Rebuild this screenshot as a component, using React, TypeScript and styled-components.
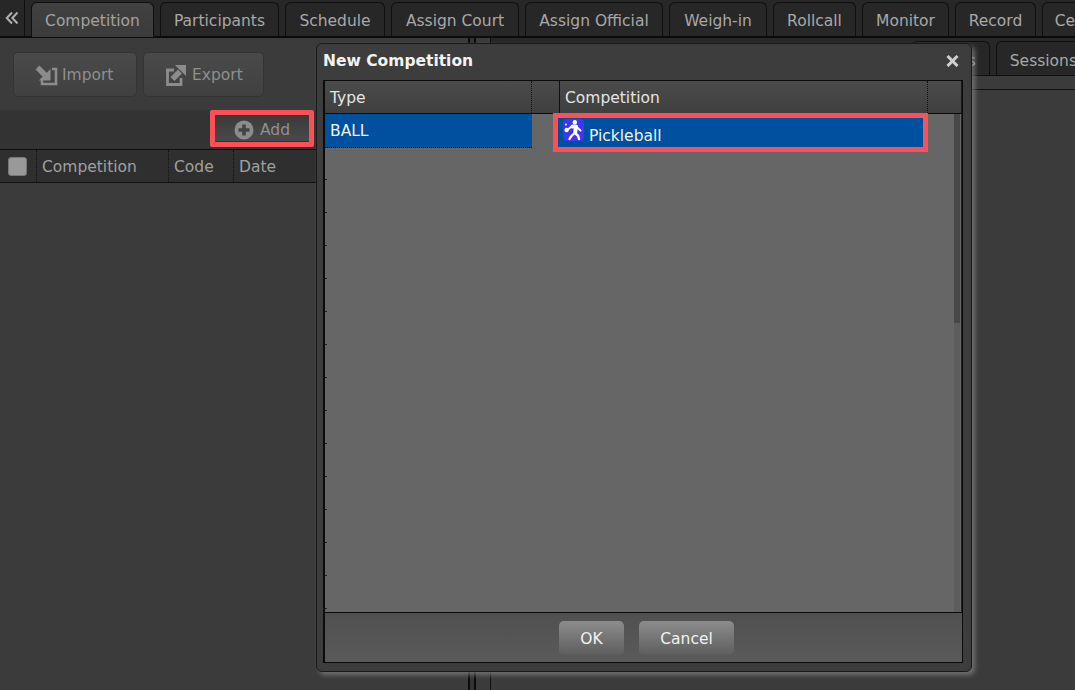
import React from 'react';
import styled, { createGlobalStyle } from 'styled-components';

const tabs = [
  { label: 'Participants', width: 119 },
  { label: 'Schedule', width: 100 },
  { label: 'Assign Court', width: 128 },
  { label: 'Assign Official', width: 138 },
  { label: 'Weigh-in', width: 98 },
  { label: 'Rollcall', width: 83 },
  { label: 'Monitor', width: 87 },
  { label: 'Record', width: 81 },
  { label: 'Certificate', width: 106 },
];

const GlobalStyle = createGlobalStyle`
  html, body { margin: 0; padding: 0; height: 100%; overflow: hidden; background: #3b3b3b; }
  * { box-sizing: border-box; }
`;

const Page = styled.div`
  position: relative;
  width: 1075px;
  height: 690px;
  overflow: hidden;
  display: flex;
  flex-direction: column;
  background: #3b3b3b;
  font-family: 'DejaVu Sans', 'Noto Sans', sans-serif;
  font-size: 15.5px;
  color: #a8a8a8;
`;

const TabBar = styled.div`
  height: 38px;
  flex: none;
  display: flex;
  gap: 6px;
  align-items: flex-end;
  background: #272727;
  border-bottom: 2px solid #0b0b0b;
  white-space: nowrap;
`;

const Collapse = styled.div`
  width: 25px;
  height: 36px;
  flex: none;
  display: flex;
  align-items: center;
  justify-content: center;
  border-right: 1px solid #0f0f0f;
  color: #b0b0b0;
`;

const Tab = styled.div<{ $active?: boolean; $w?: number }>`
  flex: none;
  width: ${p => (p.$w ? `${p.$w}px` : 'auto')};
  height: ${p => (p.$active ? 35 : 34)}px;
  padding: 2px 13px 0;
  display: flex;
  align-items: center;
  justify-content: center;
  border: 1px solid #0f0f0f;
  border-bottom: none;
  border-radius: 6px 6px 0 0;
  background: ${p => (p.$active ? 'linear-gradient(#414141, #3b3b3b)' : '#272727')};
  color: ${p => (p.$active ? '#a2a2a2' : '#a8a8a8')};
  margin-bottom: ${p => (p.$active ? -1 : 0)}px;
`;

const Body = styled.div`
  flex: 1;
  display: flex;
  min-height: 0;
`;

const LeftPanel = styled.div`
  width: 468px;
  flex: none;
  display: flex;
  flex-direction: column;
`;

const ToolRow = styled.div`
  height: 72px;
  flex: none;
  display: flex;
  gap: 6px;
  padding: 14px 0 0 13px;
  background: #3b3b3b;
`;

const ToolButton = styled.div<{ $w: number }>`
  width: ${p => p.$w}px;
  height: 45px;
  display: flex;
  align-items: center;
  gap: 4px;
  padding-left: 21px;
  border: 1px solid #343434;
  border-radius: 5px;
  background: linear-gradient(#4a4a4a, #404040);
  color: #8f8f8f;
`;

const AddRow = styled.div`
  height: 40px;
  flex: none;
  padding: 5px 0 0 215px;
  background: #333333;
  border-bottom: 1px solid #0f0f0f;
`;

const AddButton = styled.div`
  width: 94px;
  height: 26px;
  display: flex;
  align-items: center;
  justify-content: center;
  gap: 6px;
  padding-top: 4px;
  background: linear-gradient(#3a3a3a, #4a4a4a);
  color: #8f8f8f;
`;

const HeadRow = styled.div`
  height: 33px;
  flex: none;
  display: flex;
  align-items: center;
  background: #2f2f2f;
  border-bottom: 1px solid #111;
  color: #a0a0a0;
`;

const HeadCell = styled.div<{ $w: number }>`
  width: ${p => p.$w}px;
  height: 100%;
  padding: 1px 0 0 5px;
  flex: none;
  display: flex;
  align-items: center;
  border-left: 1px dotted #111;
`;

const CheckCell = styled.div`
  width: 36px;
  height: 100%;
  padding-right: 1px;
  flex: none;
  display: flex;
  align-items: center;
  justify-content: center;
`;

const CheckBox = styled.div`
  width: 19px;
  height: 19px;
  background: #999;
  border: 1px solid #777;
  border-radius: 3px;
`;

const Splitter = styled.div`
  width: 8px;
  flex: none;
  background: #333;
  border-left: 2px solid #0b0b0b;
  border-right: 2px solid #0b0b0b;
`;

const RightRail = styled.div`
  width: 15px;
  flex: none;
  background: #3b3b3b;
  border-right: 1px solid #0f0f0f;
`;

const RightPanel = styled.div`
  flex: 1;
  min-width: 0;
  display: flex;
  flex-direction: column;
`;

const SubTabs = styled.div`
  height: 38px;
  flex: none;
  display: flex;
  justify-content: flex-end;
  align-items: flex-end;
  gap: 6px;
  background: #272727;
  border-bottom: 1px solid #0f0f0f;
  white-space: nowrap;
`;

const SubTab = styled(Tab)`
  height: 34px;
  padding-top: 4px;
  &:last-child { margin-right: -16px; }
`;

const SubStrip = styled.div`
  height: 14px;
  flex: none;
  background: #3b3b3b;
  border-bottom: 1px solid #0f0f0f;
`;

const Dialog = styled.div`
  position: absolute;
  left: 316px;
  top: 43px;
  width: 656px;
  height: 629px;
  display: flex;
  flex-direction: column;
  background: #3d3d3d;
  border: 1px solid #1a1a1a;
  border-radius: 6px;
  box-shadow: 3px 3px 5px rgba(130, 130, 130, 0.75);
  padding: 0 8px 8px 6px;
`;

const DialogTitle = styled.div`
  height: 36px;
  flex: none;
  display: flex;
  align-items: center;
  justify-content: space-between;
  color: #f2f2f2;
  font-weight: 700;
  font-size: 15.5px;
  padding: 0 4px 3px 0;
`;

const Close = styled.div`
  display: flex;
  color: #cfcfcf;
`;

const DialogInner = styled.div`
  flex: 1;
  min-height: 0;
  display: flex;
  flex-direction: column;
  border: 1px solid #0b0b0b;
  border-left-width: 2px;
  background: #555;
`;

const Grid = styled.div`
  flex: 1;
  min-height: 0;
  position: relative;
  display: flex;
  flex-direction: column;
  border-bottom: 1px solid #0b0b0b;
  border-right: 1px solid #222;
  background: repeating-linear-gradient(transparent 0 32px, #222 32px 33px) left top / 2px 100% no-repeat, #666;
`;

const GridHead = styled.div`
  height: 33px;
  flex: none;
  display: flex;
  border-bottom: 1px solid #0b0b0b;
  background: linear-gradient(#4b4b4b, #3f3f3f);
  color: #e4e4e4;
`;

const GridHeadCell = styled.div<{ $w: number; $solid?: boolean }>`
  width: ${p => p.$w}px;
  flex: none;
  padding: 2px 0 0 5px;
  display: flex;
  align-items: center;
  border-right: 1px ${p => (p.$solid ? 'solid' : 'dotted')} #111;
`;

const GridRow = styled.div`
  height: 36px;
  flex: none;
  display: flex;
  gap: 21px;
`;

const TypeCell = styled.div`
  width: 207px;
  height: 34px;
  padding: 1px 0 0 5px;
  display: flex;
  align-items: center;
  background: #0050a0;
  color: #f2f2f2;
  border-bottom: 1px dotted #111;
`;

const CompetitionCell = styled.div`
  position: relative;
  width: 375px;
  height: 39px;
  margin-top: -1px;
  padding-left: 5px;
  display: flex;
  align-items: flex-start;
  gap: 5px;
  background: #0050a0;
  color: #f2f2f2;
  border: 5px solid #fb5058;
`;

const CellLabel = styled.span`
  margin-top: 9px;
`;

const SportIcon = styled.svg`
  margin-top: 1px;
  flex: none;
`;

const ScrollTrack = styled.div`
  position: absolute;
  right: 1px;
  top: 33px;
  bottom: 0;
  width: 6px;
  background: #5c5c5c;
`;

const ScrollThumb = styled.div`
  height: 209px;
  background: #474747;
`;

const Footer = styled.div`
  height: 49px;
  flex: none;
  display: flex;
  align-items: flex-start;
  justify-content: center;
  gap: 15px;
  padding: 8px 0 0 6px;
  background: linear-gradient(#505050, #5a5a5a);
`;

const DialogButton = styled.div<{ $w: number }>`
  width: ${p => p.$w}px;
  height: 34px;
  padding-top: 2px;
  display: flex;
  align-items: center;
  justify-content: center;
  border-radius: 5px;
  background: linear-gradient(#8c8c8c, #5e5e5e);
  color: #f2f2f2;
`;

const Highlight = styled.div`
  position: absolute;
  left: 210px;
  top: 110px;
  width: 104px;
  height: 37px;
  border: 5px solid #fb5058;
  border-radius: 2px;
`;

const App = () => {
  return (
    <>
      <GlobalStyle />
      <Page>
        <TabBar>
          <Collapse>
            <svg width="14" height="14" viewBox="0 0 14 14" fill="none" stroke="currentColor" strokeWidth="2">
              <path d="M7 1.5 1.8 7 7 12.5M12.5 1.5 7.3 7l5.2 5.5" />
            </svg>
          </Collapse>
          <Tab $active $w={123}>Competition</Tab>
          {tabs.map(t => (
            <Tab key={t.label} $w={t.width}>{t.label}</Tab>
          ))}
        </TabBar>
        <Body>
          <LeftPanel>
            <ToolRow>
              <ToolButton $w={124}>
                <svg width="23" height="22" viewBox="0 0 23 22" fill="none">
                  <path d="M7 14v6h14V5h-4" stroke="#8c8c8c" strokeWidth="2.6" />
                  <path d="M2.5 3.5 10 11" stroke="#8c8c8c" strokeWidth="5.5" />
                  <path d="M15.5 5v11.5H4z" fill="#8c8c8c" />
                </svg>
                Import
              </ToolButton>
              <ToolButton $w={121}>
                <svg width="23" height="22" viewBox="0 0 23 22" fill="none">
                  <path d="M9 6H2.5v14.5H16V14" stroke="#8c8c8c" strokeWidth="2.8" />
                  <path d="M7.5 15 15 7.5" stroke="#8c8c8c" strokeWidth="5.5" />
                  <path d="M10 1h11v11z" fill="#8c8c8c" />
                </svg>
                Export
              </ToolButton>
            </ToolRow>
            <AddRow>
              <AddButton>
                <svg width="20" height="20" viewBox="0 0 20 20">
                  <circle cx="10" cy="10" r="9.5" fill="#8c8c8c" />
                  <path d="M8.2 4.5h3.6v3.7h3.7v3.6h-3.7v3.7H8.2v-3.7H4.5V8.2h3.7z" fill="#444" />
                </svg>
                Add
              </AddButton>
            </AddRow>
            <HeadRow>
              <CheckCell>
                <CheckBox />
              </CheckCell>
              <HeadCell $w={132}>Competition</HeadCell>
              <HeadCell $w={65}>Code</HeadCell>
              <HeadCell $w={100}>Date</HeadCell>
            </HeadRow>
          </LeftPanel>
          <Splitter />
          <RightRail />
          <RightPanel>
            <SubTabs>
              <SubTab>Courts</SubTab>
              <SubTab>Sessions</SubTab>
            </SubTabs>
            <SubStrip />
          </RightPanel>
        </Body>
        <Highlight />
        <Dialog>
          <DialogTitle>
            New Competition
            <Close>
              <svg width="13" height="12" viewBox="0 0 13 12" stroke="currentColor" strokeWidth="3" fill="none">
                <path d="M1.5 1 11.5 11M11.5 1 1.5 11" />
              </svg>
            </Close>
          </DialogTitle>
          <DialogInner>
            <Grid>
              <GridHead>
                <GridHeadCell $w={207}>Type</GridHeadCell>
                <GridHeadCell $w={28} $solid />
                <GridHeadCell $w={368}>Competition</GridHeadCell>
                <GridHeadCell $w={34} />
              </GridHead>
              <GridRow>
                <TypeCell>BALL</TypeCell>
                <CompetitionCell>
                  <SportIcon width="21" height="22" viewBox="0 0 21 22">
                    <rect width="21" height="22" rx="4" fill="#3f35f5" />
                    <g fill="none" stroke="#fff" strokeLinecap="round" strokeLinejoin="round">
                      <path d="M9.5 7.5h3.5L12.2 13.5" strokeWidth="4" />
                      <path d="M9 7.2 4.8 10.5" strokeWidth="2" />
                      <path d="M13 7.5 17.5 11.5" strokeWidth="2" />
                      <path d="M11.5 14 8 17.5 6.5 20" strokeWidth="2.4" />
                      <path d="M12 14l3.2 3 .8 3" strokeWidth="2.4" />
                    </g>
                    <circle cx="11.8" cy="3.2" r="2.2" fill="#fff" />
                    <circle cx="3.6" cy="11" r="2.2" fill="#fff" />
                    <circle cx="3" cy="5.5" r="0.9" fill="#fff" />
                  </SportIcon>
                  <CellLabel>Pickleball</CellLabel>
                </CompetitionCell>
              </GridRow>
              <ScrollTrack>
                <ScrollThumb />
              </ScrollTrack>
            </Grid>
            <Footer>
              <DialogButton $w={65}>OK</DialogButton>
              <DialogButton $w={95}>Cancel</DialogButton>
            </Footer>
          </DialogInner>
        </Dialog>
      </Page>
    </>
  );
};

export default App;
